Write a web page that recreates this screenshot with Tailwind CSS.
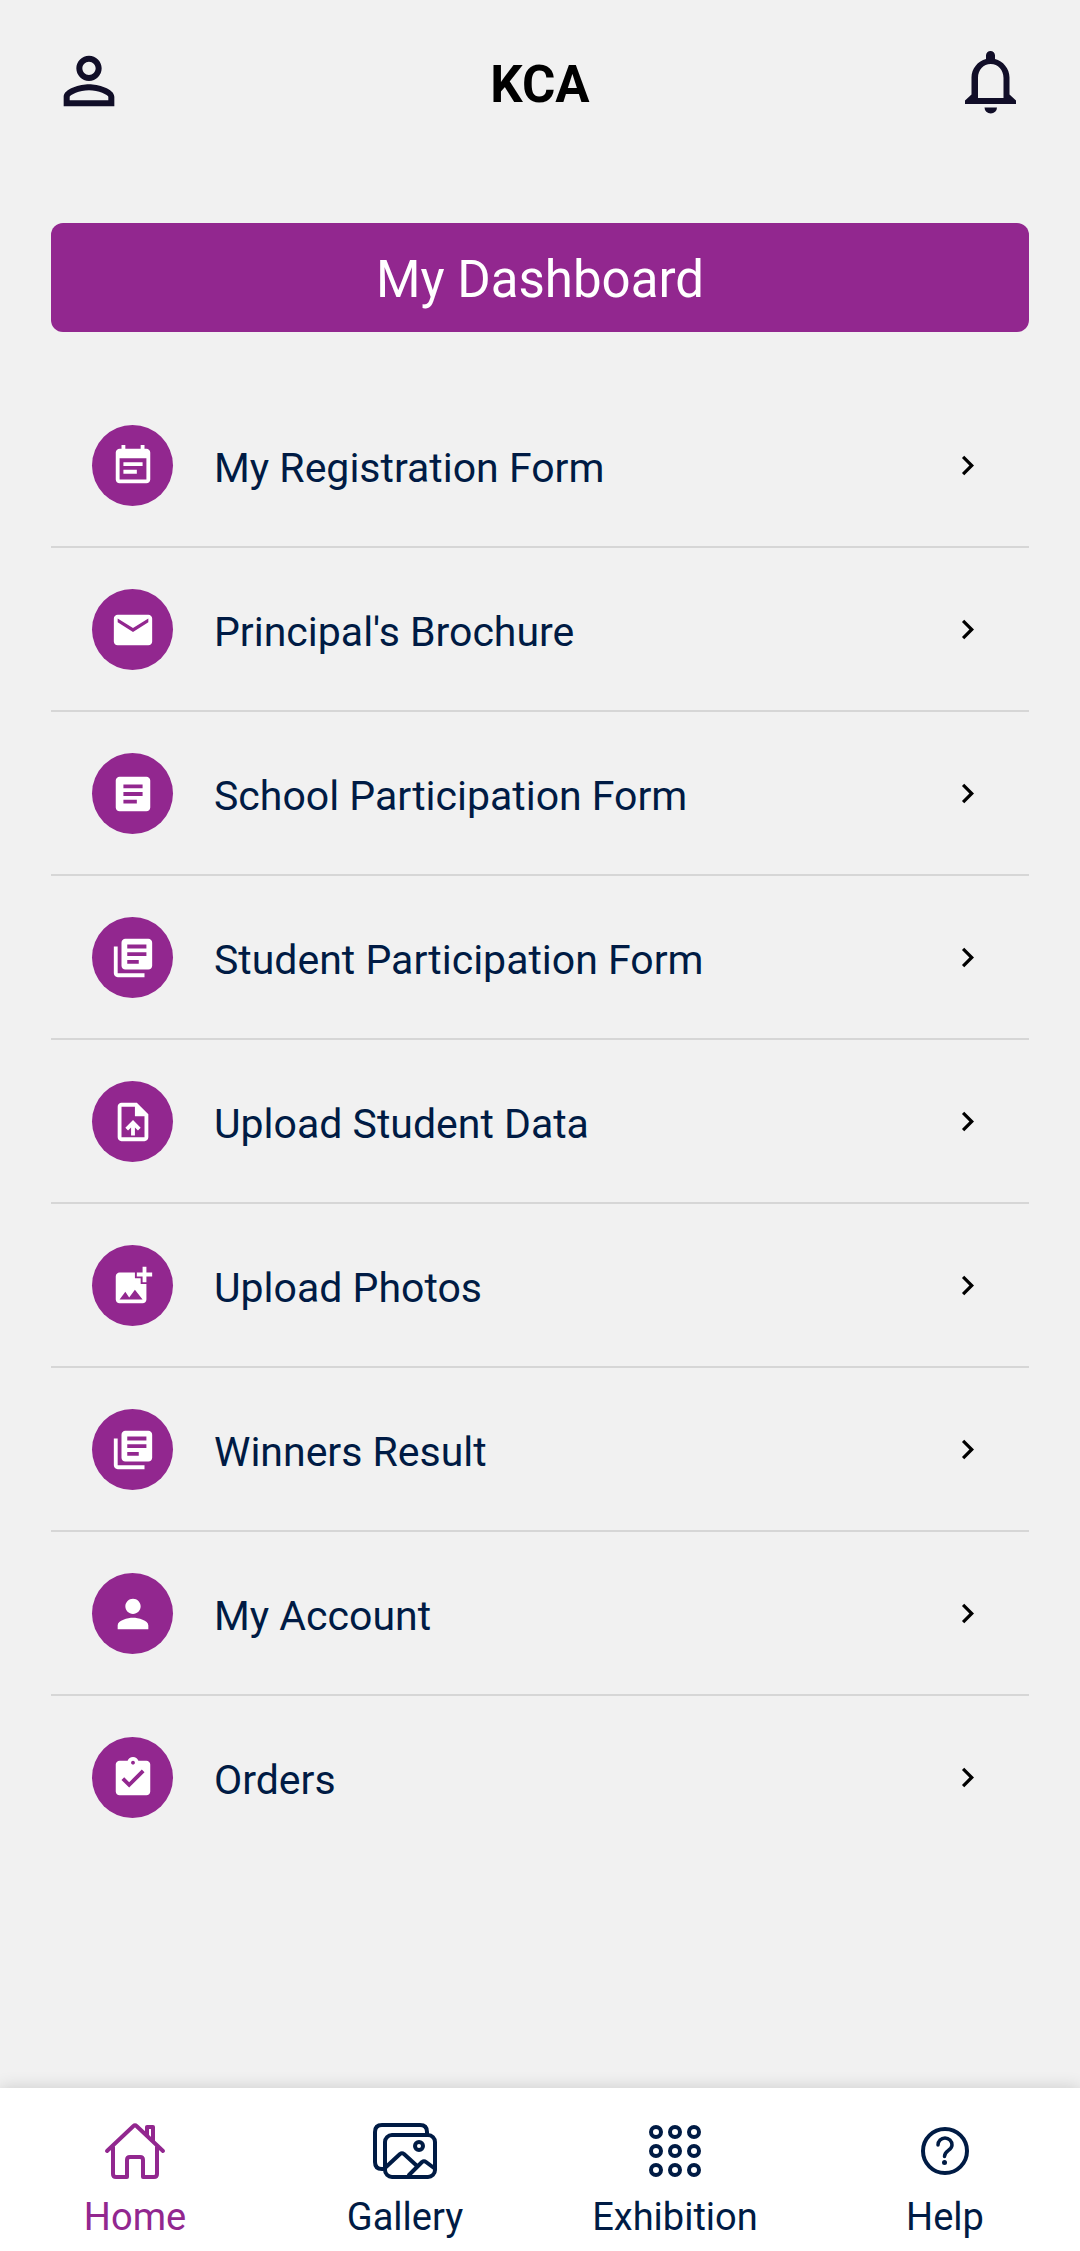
<!DOCTYPE html>
<html lang="en">
<head>
    <meta charset="UTF-8">
    <meta name="viewport" content="width=device-width, initial-scale=1.0">
    <title>KCA</title>
    <script src="https://cdn.jsdelivr.net/npm/@tailwindcss/browser@4"></script>
</head>
<body class="bg-[#f1f1f1] font-['Roboto',sans-serif] min-h-screen flex flex-col">
    <svg class="hidden">
        <symbol id="chevron" viewBox="0 0 24 24"><path d="M10 6 8.59 7.41 13.17 12l-4.58 4.59L10 18l6-6z"/></symbol>
        <symbol id="books" viewBox="0 0 24 24"><path d="M4 6H2v14c0 1.1.9 2 2 2h14v-2H4V6zm16-4H8c-1.1 0-2 .9-2 2v12c0 1.1.9 2 2 2h12c1.1 0 2-.9 2-2V4c0-1.1-.9-2-2-2zm-1 9H9V9h10v2zm-4 4H9v-2h6v2zm4-8H9V5h10v2z"/></symbol>
    </svg>

    <header class="flex justify-between items-center px-[51px] pt-[43px] text-[#110e28]">
        <button type="button" aria-label="Profile">
            <svg class="size-[76px]" viewBox="0 0 24 24" fill="currentColor"><path d="M12 5.9c1.16 0 2.1.94 2.1 2.1s-.94 2.1-2.1 2.1S9.9 9.16 9.9 8s.94-2.1 2.1-2.1m0 9c2.97 0 6.1 1.46 6.1 2.1v1.1H5.9V17c0-.64 3.13-2.1 6.1-2.1M12 4C9.79 4 8 5.79 8 8s1.79 4 4 4 4-1.79 4-4-1.79-4-4-4zm0 9c-2.67 0-8 1.34-8 4v3h16v-3c0-2.66-5.33-4-8-4z"/></svg>
        </button>
        <h1 class="text-[51px] leading-[60px] pt-2 font-bold text-black">KCA</h1>
        <button type="button" aria-label="Notifications">
            <svg class="size-[76px]" viewBox="0 0 76 76" fill="currentColor">
                <path fill-rule="evenodd" d="M33 12.5a4.5 4.5 0 0 1 9 0V16C50 18 56.500 25.500 56.500 34.500V51.500l6.500 6V61H12V57.500l6.500-6V34.500C18.500 25.500 25 18 33 16zM25 55H50.500V35C50.500 27 45 21 37.700 21S25 27 25 35z"/>
                <path d="M31.500 64.500h12.500a6.250 6 0 0 1-12.500 0z"/>
            </svg>
        </button>
    </header>

    <main class="px-[51px] pt-[104px] pb-16">
        <h2 class="bg-[#92278f] text-white text-center text-[51px] leading-[60px] pt-[27px] pb-[22px] rounded-xl">My Dashboard</h2>

        <ul class="mt-[52px] text-[41px] leading-[48px] text-[#001b44]">
            <li class="border-b-2 border-[#d6d6d6]">
                <a href="#" class="flex items-center pt-[41px] pb-10 pl-[41px] pr-[42px]">
                    <span class="size-[81px] rounded-full bg-[#92278f] text-white flex items-center justify-center"><svg class="size-[46px]" viewBox="0 0 24 24" fill="currentColor"><path d="M17 10H7v2h10v-2zm2-7h-1V1h-2v2H8V1H6v2H5c-1.11 0-1.99.9-1.99 2L3 19c0 1.1.89 2 2 2h14c1.1 0 2-.9 2-2V5c0-1.1-.9-2-2-2zm0 16H5V8h14v11zm-5-5H7v2h7v-2z"/></svg></span>
                    <span class="flex-1 pl-[41px] pt-1">My Registration Form</span>
                    <svg class="size-[39px] fill-black"><use href="#chevron"/></svg>
                </a>
            </li>
            <li class="border-b-2 border-[#d6d6d6]">
                <a href="#" class="flex items-center pt-[41px] pb-10 pl-[41px] pr-[42px]">
                    <span class="size-[81px] rounded-full bg-[#92278f] text-white flex items-center justify-center"><svg class="size-[46px]" viewBox="0 0 24 24" fill="currentColor"><path d="M20 4H4c-1.100 0-1.990.9-1.990 2L2 18c0 1.100.9 2 2 2h16c1.100 0 2-.9 2-2V6c0-1.100-.9-2-2-2zm0 4l-8 5-8-5V6l8 5 8-5v2z"/></svg></span>
                    <span class="flex-1 pl-[41px] pt-1">Principal's Brochure</span>
                    <svg class="size-[39px] fill-black"><use href="#chevron"/></svg>
                </a>
            </li>
            <li class="border-b-2 border-[#d6d6d6]">
                <a href="#" class="flex items-center pt-[41px] pb-10 pl-[41px] pr-[42px]">
                    <span class="size-[81px] rounded-full bg-[#92278f] text-white flex items-center justify-center"><svg class="size-[46px]" viewBox="0 0 24 24" fill="currentColor"><path d="M19 3H5c-1.100 0-2 .9-2 2v14c0 1.100.9 2 2 2h14c1.100 0 2-.9 2-2V5c0-1.100-.9-2-2-2zm-5 14H7v-2h7v2zm3-4H7v-2h10v2zm0-4H7V7h10v2z"/></svg></span>
                    <span class="flex-1 pl-[41px] pt-1">School Participation Form</span>
                    <svg class="size-[39px] fill-black"><use href="#chevron"/></svg>
                </a>
            </li>
            <li class="border-b-2 border-[#d6d6d6]">
                <a href="#" class="flex items-center pt-[41px] pb-10 pl-[41px] pr-[42px]">
                    <span class="size-[81px] rounded-full bg-[#92278f] text-white flex items-center justify-center"><svg class="size-[46px]" fill="currentColor"><use href="#books"/></svg></span>
                    <span class="flex-1 pl-[41px] pt-1">Student Participation Form</span>
                    <svg class="size-[39px] fill-black"><use href="#chevron"/></svg>
                </a>
            </li>
            <li class="border-b-2 border-[#d6d6d6]">
                <a href="#" class="flex items-center pt-[41px] pb-10 pl-[41px] pr-[42px]">
                    <span class="size-[81px] rounded-full bg-[#92278f] text-white flex items-center justify-center"><svg class="size-[46px]" viewBox="0 0 24 24" fill="currentColor"><path d="M14 2H6c-1.100 0-1.990.9-1.990 2L4 20c0 1.100.89 2 1.990 2H18c1.100 0 2-.9 2-2V8l-6-6zm4 18H6V4h7v5h5v11zM8 15.010l1.410 1.410L11 14.840V19h2v-4.160l1.590 1.590L16 15.010 12.010 11z"/></svg></span>
                    <span class="flex-1 pl-[41px] pt-1">Upload Student Data</span>
                    <svg class="size-[39px] fill-black"><use href="#chevron"/></svg>
                </a>
            </li>
            <li class="border-b-2 border-[#d6d6d6]">
                <a href="#" class="flex items-center pt-[41px] pb-10 pl-[41px] pr-[42px]">
                    <span class="size-[81px] rounded-full bg-[#92278f] text-white flex items-center justify-center"><svg class="size-[46px]" viewBox="0 0 24 24" fill="currentColor"><path d="M19 7v2.990s-1.990.01-2 0V7h-3s.01-1.990 0-2h3V2h2v3h3v2h-3zm-3 4V8h-3V5H5c-1.100 0-2 .9-2 2v12c0 1.100.9 2 2 2h12c1.100 0 2-.9 2-2v-8h-3zM5 19l3-4 2 3 3-4 4 5H5z"/></svg></span>
                    <span class="flex-1 pl-[41px] pt-1">Upload Photos</span>
                    <svg class="size-[39px] fill-black"><use href="#chevron"/></svg>
                </a>
            </li>
            <li class="border-b-2 border-[#d6d6d6]">
                <a href="#" class="flex items-center pt-[41px] pb-10 pl-[41px] pr-[42px]">
                    <span class="size-[81px] rounded-full bg-[#92278f] text-white flex items-center justify-center"><svg class="size-[46px]" fill="currentColor"><use href="#books"/></svg></span>
                    <span class="flex-1 pl-[41px] pt-1">Winners Result</span>
                    <svg class="size-[39px] fill-black"><use href="#chevron"/></svg>
                </a>
            </li>
            <li class="border-b-2 border-[#d6d6d6]">
                <a href="#" class="flex items-center pt-[41px] pb-10 pl-[41px] pr-[42px]">
                    <span class="size-[81px] rounded-full bg-[#92278f] text-white flex items-center justify-center"><svg class="size-[46px]" viewBox="0 0 24 24" fill="currentColor"><path d="M12 12c2.210 0 4-1.790 4-4s-1.790-4-4-4-4 1.790-4 4 1.790 4 4 4zm0 2c-2.670 0-8 1.340-8 4v2h16v-2c0-2.660-5.330-4-8-4z"/></svg></span>
                    <span class="flex-1 pl-[41px] pt-1">My Account</span>
                    <svg class="size-[39px] fill-black"><use href="#chevron"/></svg>
                </a>
            </li>
            <li>
                <a href="#" class="flex items-center pt-[41px] pb-10 pl-[41px] pr-[42px]">
                    <span class="size-[81px] rounded-full bg-[#92278f] text-white flex items-center justify-center"><svg class="size-[46px]" viewBox="0 0 24 24" fill="currentColor"><path d="M19 3h-4.180C14.400 1.840 13.300 1 12 1c-1.300 0-2.400.84-2.820 2H5c-1.100 0-2 .9-2 2v14c0 1.100.9 2 2 2h14c1.100 0 2-.9 2-2V5c0-1.100-.9-2-2-2zm-7 0c.55 0 1 .45 1 1s-.45 1-1 1-1-.45-1-1 .45-1 1-1zm-2 14l-4-4 1.410-1.410L10 14.170l6.590-6.590L18 9l-8 8z"/></svg></span>
                    <span class="flex-1 pl-[41px] pt-1">Orders</span>
                    <svg class="size-[39px] fill-black"><use href="#chevron"/></svg>
                </a>
            </li>
        </ul>
    </main>

    <nav class="mt-auto bg-white grid grid-cols-4 pt-[31px] pb-3 text-[38px] leading-[44px] text-[#001b44] shadow-[0_0_16px_rgba(0,0,0,0.16)]">
        <a href="#" class="flex flex-col items-center gap-3 text-[#92278f]">
            <svg class="size-16" viewBox="-2 -4 64 64" fill="none" stroke="currentColor" stroke-width="4" stroke-linecap="round" stroke-linejoin="round">
                <path d="M2 28 28.500 3Q30 1.500 31.500 3L58 28M42 12V4h6v14M8 24V51q0 3 3 3h11V37q0-3 3-3h10q3 0 3 3v17h11q3 0 3-3V24"/>
            </svg>
            <span>Home</span>
        </a>
        <a href="#" class="flex flex-col items-center gap-3">
            <svg class="size-16" viewBox="0 -4 64 64" fill="none" stroke="currentColor" stroke-width="4" stroke-linecap="round" stroke-linejoin="round">
                <path d="M10 46H9q-7 0-7-7V9q0-7 7-7h38q7 0 7 7v2"/>
                <rect x="12" y="12" width="50" height="42" rx="7"/>
                <circle cx="46" cy="23" r="4"/>
                <path d="M13 44 27 31q2-1.500 4 0L43 42M36 52 49 39q2-1.500 4 0l8 6"/>
            </svg>
            <span>Gallery</span>
        </a>
        <a href="#" class="flex flex-col items-center gap-3">
            <svg class="size-16" viewBox="0 0 64 64" fill="none" stroke="currentColor" stroke-width="4">
                <circle cx="13" cy="13" r="5"/><circle cx="32" cy="13" r="5"/><circle cx="51" cy="13" r="5"/>
                <circle cx="13" cy="32" r="5"/><circle cx="32" cy="32" r="5"/><circle cx="51" cy="32" r="5"/>
                <circle cx="13" cy="51" r="5"/><circle cx="32" cy="51" r="5"/><circle cx="51" cy="51" r="5"/>
            </svg>
            <span>Exhibition</span>
        </a>
        <a href="#" class="flex flex-col items-center gap-3">
            <svg class="size-16" viewBox="0 0 64 64" fill="none" stroke="currentColor" stroke-width="4" stroke-linecap="round">
                <circle cx="32" cy="32" r="22"/>
                <path stroke-width="3.500" d="M25 26a7 7 0 0 1 14 0c0 5.500-7.500 5.500-7.500 11.500"/>
                <circle cx="31.500" cy="43.500" r="2.500" fill="currentColor" stroke="none"/>
            </svg>
            <span>Help</span>
        </a>
    </nav>
</body>
</html>
